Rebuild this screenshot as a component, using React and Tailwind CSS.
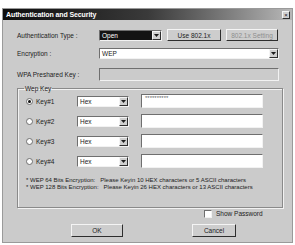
import React from 'react';

const sunken = 'border border-t-[#6f6f6f] border-l-[#6f6f6f] border-b-[#f2f2f2] border-r-[#f2f2f2]';
const raised = 'border border-t-[#f4f4f4] border-l-[#f4f4f4] border-b-[#2e2e2e] border-r-[#2e2e2e]';

function Arrow() {
  return (
    <div className={`w-[9px] h-full bg-[#cfcfcf] ${raised} flex items-center justify-center`}>
      <svg width="5" height="3" viewBox="0 0 5 3">
        <path d="M0 0 H5 L2.5 3 Z" fill="#1c1c1c" />
      </svg>
    </div>
  );
}

function Select({ value, width, dark }) {
  return (
    <div className={`h-[11px] ${sunken} flex items-stretch ${dark ? 'bg-[#141414]' : 'bg-white'}`} style={{ width }}>
      <div className={`flex-1 pl-[2px] leading-[9px] ${dark ? 'text-white' : 'text-[#222]'}`}>{value}</div>
      <Arrow />
    </div>
  );
}

function Button({ children, width, height, disabled }) {
  return (
    <div
      className={`${raised} bg-[#cdcdcd] flex items-center justify-center ${disabled ? 'text-[#8e8e8e]' : 'text-[#222]'}`}
      style={{ width, height }}
    >
      {children}
    </div>
  );
}

function KeyRow({ n, checked, value }) {
  return (
    <div className="h-[14px] flex items-center">
      <div className="w-[7px] h-[7px] ml-[6px] rounded-full bg-white border border-[#6f6f6f] flex items-center justify-center">
        {checked && <div className="w-[3px] h-[3px] rounded-full bg-[#111]" />}
      </div>
      <div className="w-[44px] pl-[3px]">Key#{n}</div>
      <Select value="Hex" width={52} />
      <div className={`ml-[12px] w-[122px] h-[14px] bg-white ${sunken} pl-[3px] leading-[6px] text-[6px] text-[#666]`}>
        {value}
      </div>
    </div>
  );
}

export default function App() {
  return (
    <div className="w-[295px] h-[245px] bg-white pt-[8px] pl-[2px] font-['Liberation_Sans',Arial,sans-serif] text-[6.5px] leading-[7px] text-[#222]">
      <div className="w-[291px] h-[235px] bg-[#cbcbcb] border border-[#9a9a9a] flex flex-col">
        <div className="h-[11px] bg-gradient-to-r from-[#0e0e0e] via-[#3a3a3a] to-[#b8b8b8] flex items-center pl-[3px] pr-[2px]">
          <span className="text-white font-bold text-[7px] tracking-[-0.1px]">Authentication and Security</span>
          <div className={`ml-auto w-[8px] h-[8px] bg-[#cfcfcf] ${raised} flex items-center justify-center text-[6px] leading-[6px] text-[#111]`}>
            ×
          </div>
        </div>

        <div className="flex flex-col pl-[14px] pt-[9px]">
          <div className="flex items-center h-[12px]">
            <div className="w-[82px]">Authentication Type :</div>
            <Select value="Open" width={63} dark />
            <div className="ml-[5px]"><Button width={54} height={12}>Use 802.1x</Button></div>
            <div className="ml-[5px]"><Button width={52} height={12} disabled>802.1x Setting</Button></div>
          </div>

          <div className="flex items-center h-[11px] mt-[7px]">
            <div className="w-[82px]">Encryption :</div>
            <Select value="WEP" width={180} />
          </div>

          <div className="flex items-center h-[13px] mt-[9px]">
            <div className="w-[82px]">WPA Preshared Key :</div>
            <div className={`w-[180px] h-[13px] bg-[#cbcbcb] ${sunken}`} />
          </div>

          <fieldset className="mt-[4px] w-[266px] h-[123px] border border-[#8a8a8a] shadow-[inset_1px_1px_0_#f2f2f2,1px_1px_0_#f2f2f2] px-[2px]">
            <legend className="ml-[4px] px-[1px]">Wep Key</legend>
            <div className="flex flex-col gap-[6px] mt-[2px]">
              <KeyRow n={1} checked value="**********" />
              <KeyRow n={2} />
              <KeyRow n={3} />
              <KeyRow n={4} />
            </div>
            <div className="mt-[9px] pl-[6px] text-[6px] leading-[7px]">
              <div>* WEP 64 Bits Encryption: &nbsp;&nbsp;Please Keyin 10 HEX characters or 5 ASCII characters</div>
              <div>* WEP 128 Bits Encryption: &nbsp;&nbsp;Please Keyin 26 HEX characters or 13 ASCII characters</div>
            </div>
          </fieldset>

          <div className="flex items-center mt-[1px] pl-[187px] h-[9px]">
            <div className={`w-[8px] h-[8px] bg-white ${sunken}`} />
            <div className="ml-[4px]">Show Password</div>
          </div>

          <div className="flex mt-[6px]">
            <div className="ml-[54px]"><Button width={52} height={13}>OK</Button></div>
            <div className="ml-[69px]"><Button width={44} height={13}>Cancel</Button></div>
          </div>
        </div>
      </div>
    </div>
  );
}
